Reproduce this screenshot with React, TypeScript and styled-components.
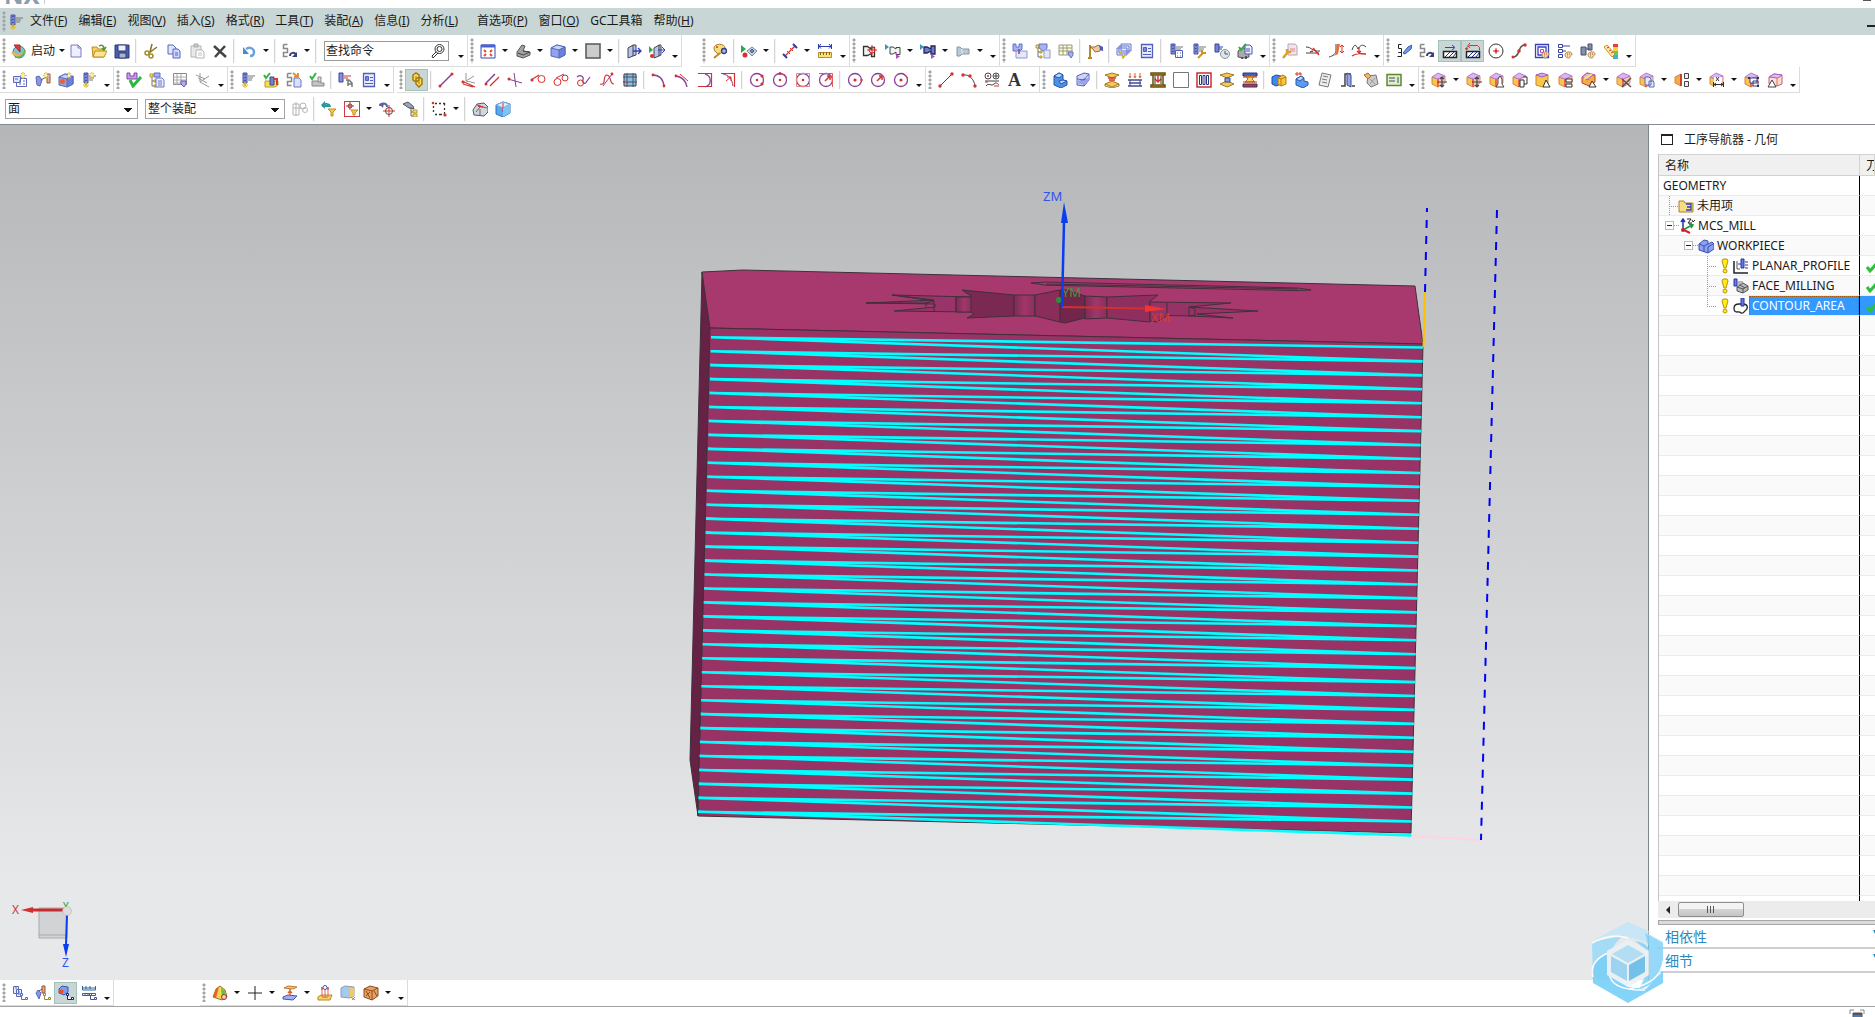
import React from "react";
import styled, { createGlobalStyle, css } from "styled-components";

/* ---------- icon art: [path, stroke, fill, stroke width] on a 16 x 16 grid ---------- */

type Shape = [d: string, stroke?: string, fill?: string, width?: number];

const dot = (x: number, y: number, r: number) =>
  `M${x - r} ${y}a${r} ${r} 0 1 0 ${2 * r} 0a${r} ${r} 0 1 0 ${-2 * r} 0z`;

const BLUE = "#5a68bc";
const RED = "#d9302c";
const PURPLE = "#8a3f96";
const DARK = "#222";

const cube: Shape[] = [
  ["M1 5l6-3 8 2v8l-6 3-8-2z", BLUE, "#8fa4ea"],
  ["M1 5l6-3 8 2-6 3z", BLUE, "#c8d4fc"],
  ["M9 7v8l6-3V4z", BLUE, "#6c82d8"],
];
const goldCube: Shape[] = [
  ["M1 5l6 2v8l-6-3z", "#d8842e", "#fbc44e"],
  ["M7 7l7-3v7l-7 4z", "#d88a80", "#f6c8b8"],
  ["M1 5l6-4 7 3-7 3z", "#b07ed0", "#dcb4ee"],
  ["M7 7v8", "#ea5c3c", "none", 1.6],
];
const mill: Shape[] = [
  ["M3 1h4v10H3z", "#4a52a4", "#8490e0"],
  ["M4 3l2-1M4 6l2-1M4 9l2-1", "#3c448c"],
  ["M8 4h7M8 6h5M8 8h4", "#777"],
];
const star: Shape[] = [["M11 0v7M8 3.5h7M9 1l4 5M13 1L9 6", "#e5bb1d"], [dot(11, 3.5, 1), "#fff6a0", "#fff"]];
const lowStar: Shape[] = [["M5 10v6M2 13h6M3 11l4 4M7 11l-4 4", "#e5bb1d"]];
const page: Shape[] = [["M7 6h6l2 2v7H7z", "#6978c8", "#e9edff"], ["M9 9h4M9 11h4M9 13h4", "#6978c8"]];
const tree: Shape[] = [["M3 4v10h3M3 9h3", "#777"], ["M1 2h3v3H1zM5 8h2v2H5zM5 13h2v2H5z", "#b69a2c", "#f2dc78"]];
const holder: Shape[] = [["M1 1h3v3h3V1h3v5L8 8v4H6V8H1z", "#6070c8", "#a7b2f0"]];
const palette: Shape[] = [["M8 12c0-4 7-4 7-1 0 2-2 1-2 3s-5 1-5-2z", "#b48a4c", "#f5dcae"], ["M10 11h1M12 11h1", RED], ["M10 13h1", "#3bb54a"]];
const listS: Shape[] = [["M5.5 1.500h-3v4h3v4h-3M2.500 9.500h3v4h-4", DARK]];
const listG: Shape[] = [["M1.500 1.500h4M1.500 1.500v4h4v4h-4v4h4", "#888", "none", 1.5]];
const redo: Shape[] = [["M8 13c0-4 5-4 6-1", "#3a3f7c", "none", 2], ["M15 9v5h-5z", "none", "#3a3f7c"]];
const tag = (color: string): Shape[] => [["M8.500 8.500h2v2h-2zM9.500 10.500v4h4M13.500 12.500h2v2h-2z", color, "#fff"]];
const funnel: Shape[] = [["M7 8h8l-3 3v4h-2v-4z", "#c98b1c", "#fcc84c"]];
const cone: Shape[] = [["M1.500 3.500h4l4 3V4.500h3v9h-3v-3l-4 2h-4z", "#333", "#f2f2f2", 1.3]];
const target: Shape[] = [[dot(8, 8, 6.5), PURPLE, "none", 1.3]];

const ART: Record<string, Shape[]> = {
  app: [...mill, ...lowStar],
  launch: [
    [dot(8, 9, 6), "#2b7f95", "#7cc4d4"],
    ["M1 9c4 5 10 5 13-1", "#f7b23c", "none", 2.5],
    ["M4 14c5 1 9-2 10-7", "#6cb04c", "none", 1.5],
    ["M3 2l6 0v7z", "#b22020", "#e03c34"],
  ],
  newFile: [["M3 2h7l3 3v9H3z", "#7f78c4", "#edf0ff"], ["M10 2v3h3", "#7f78c4"]],
  open: [
    ["M1 4h5l1 2h6v8H2z", "#b88d25", "#f5cf60"],
    ["M4 8h12l-3 6H2z", "#b88d25", "#ffe594"],
    ["M8 3c3-2 5 0 5 3M11 5l2 2 2-3", "#4e9b30", "none", 1.5],
  ],
  save: [["M1 2h14v13H1z", "#303b7c", "#4a5cae"], ["M4 2h8v6H4z", "#303b7c", "#eef0f8"], ["M5 10h7v5H5z", "#303b7c", "#a9b4c4"]],
  cut: [["M9 1L7 9M14 4L6 10", "#8a7326", "none", 1.5], [dot(4, 10, 2), "#a58b2c", "none", 1.5], [dot(8, 13, 2), "#a58b2c", "none", 1.5]],
  copy: [["M2 2h5l3 3v6H2z", "#5966bb", "#dfe4ff"], ["M7 6h5l2 2v7H7z", "#5966bb", "#cdd5ff"], ["M9 10h3M9 12h3", "#5966bb"]],
  paste: [["M2 3h10v11H2z", "#b4b4b4", "#e9e9e9"], ["M5 1h4v3H5z", "#a9a9a9", "#ccc"], ["M7 7h6l2 2v6H7z", "#b4b4b4", "#fff"], ["M9 10h4M9 12h4", "#c4c4c4"]],
  remove: [["M2 3l12 11M13 3L3 14", "#444", "none", 2.5]],
  undo: [["M5 6c4-3 8 0 8 3 0 3-2 4-4 4", "#6aa2e0", "none", 2.5], ["M2 4v7h6z", "none", "#4a88d4"]],
  repeat: [...listG, ...redo],
  fit: [["M1 2h14v13H1z", "#3548b8", "#fff"], ["M1 3h14", "#4a62d8", "none", 3], ["M4 7l2 2M12 7l-2 2M4 13l2-2M12 13l-2-2", "#e2502c", "none", 2]],
  orient: [["M2 9l5-7 3 1-2 5 7 1v3l-7 3-6-2z", "#555", "#a4a4a4"], ["M3 10l5 2 7-3M8 8l6 1", "#444"]],
  cube,
  square: [["M1 1h14v14H1z", "#555", "#ccc", 1.5]],
  section: [["M2 5l5-3v11l-5 2zM7 2h3v10l-3 1", "#444", "#b8c4ee"], ["M7 8h7M12 5l3 3-3 3", "#2c3cc0", "none", 1.3]],
  sectionB: [["M5 5l5-3v11l-5 2zM10 2h2v10l-2 1", "#444", "#b8c4ee"], ["M9 7h6M13 4l3 3-3 3", "#2c3cc0"], ["M0 3l4 4-4 3z", "none", "#2fa84c"], [dot(3, 13, 2), "none", RED]],
  paint: [["M2 5c0-5 11-5 11 0 0 4-3 3-4 5s-7 0-7-5z", "#a08032", "#f6dc7c"], [dot(5, 4, 1), "none", RED], [dot(12, 8, 2.5), "#39407c", "#aab4ee", 1.3], ["M8 10l-6 5", "#c4872c", "none", 2]],
  showHide: [["M0 2l5 4-5 4z", "none", "#2fa84c"], [dot(4, 12, 2.5), "none", RED], ["M6 8l5-4 5 4-5 5z", "#7a889c", "#c3d4ea"], ["M9 8l2-2 2 2-2 2z", "#55627c", "#6f86b4"]],
  measure: [["M3 13L13 3", RED, "none", 1.3], ["M1 11l4 4M11 1l4 4", "#333c9c", "none", 2], ["M5 8l3 3M8 5l3 3", RED]],
  ruler: [["M1 3.500h14M1.500 1v5M14.500 1v5M4 1L2 3.500l2 2M12 1l2 2.500-2 2", "#2c3ca8"], ["M1.500 9.500h13v5h-13z", "#b7902c", "#fbe07c"], ["M3.500 9v3M6.500 9v3M9.500 9v3M12.500 9v3", "#80641c"]],
  coneTarget: [...cone, [dot(10, 7, 3), RED], ["M10 2v10M5 7h10", RED]],
  coneMove: [["M5 4h3l3 2V4.500h4v7h-4V9L8 11H5z", "#444", "#f4f4f4"], ["M0 1l4 3-4 3z", "none", "#3b95b8"], ["M11 11l4 2.500-4 2.500z", "none", "#b44cc4"]],
  coneDark: [["M4 4h3l4 2V3h4v8h-4V8L7 10H4z", "#23265c", "#6f7ac8", 1.3], ["M0 1l4 3-4 3z", "none", "#3b95b8"], ["M11 11l4 2.500-4 2.500z", "none", "#b44cc4"]],
  coneSoft: [["M2 4h3l2 2h7v5H7l-2 2H2z", "#8496a2", "#b8cad8"], ["M7 6v5", "#e4eef4"]],
  holderPage: [...holder, ["M4 8h11v7H4z", "#8f99c9", "#e4e7f5"], ["M7 6v5", PURPLE, "none", 1.5]],
  holderTree: [...tree, ["M4 1h8v4l-2 3H8L4 5z", "#6070c8", "#a7b2f0"], ["M9 7h6v8H9z", "#8f99c9", "#e4e7f5"]],
  holderGrid: [["M1 2h13v10H1z", "#9a9a7a", "#fbfbe6"], ["M1 5h13M1 8h13M5 2v10M9 2v10", "#9a9a7a"], ["M10 9h5v3l-2 3-2-3z", "#6070c8", "#a7b2f0"]],
  point: [["M3 2v13M1 15h4", "#b68a24", "none", 2], ["M3 4h5l3-2 3 2-1 4-5 1-2-3z", "#9c6a3c", "#f4c89c"], ["M12 2l4 2v4l-3-1z", "none", "#4658c4"]],
  windows: [["M5 1h10v7H5zM3 3h10v7H3zM1 5h10v7H1z", "#6878cc", "#e5eaff"], ["M3 8l3 3M6 12l1 3 2-3", "#d4ae24", "#fff0a0", 1.5]],
  report: [["M2.500 1.500h11v13h-11z", "#5260bc", "#e8ecff", 1.3], ["M4.500 4.500h3v4h-3z", "#5260bc", "#7c88dc"], ["M9 5.500h3M9 8.500h3M4 11.500h8", "#5260bc"]],
  millPage: [...mill, ["M7.500 7.500h7v7h-7z", "#5260bc", "#fff"], ["M9 10h1M12 10h1M9 13h1M12 13h1", "#5260bc"]],
  millWrench: [...mill, ["M7 15l5-5M11 7v3h4", "#c99424", "none", 2]],
  millClock: [["M1 1h4v8H1zM5 4h4M5 6h3", "#3d4596", "#7480d8"], [dot(11, 11, 4.5), "#8a959c", "#dbe6ea"], ["M11 8v3h3", "#555"]],
  post: [["M1 8l4-3 7 1v8l-4 1-7-1z", "#555", "#aaa"], ["M2 4l2 3 5-6", "#37ad38", "none", 2], ["M8 2h5l2 2v7H8z", "#4a58b4", "#e9edff"], ["M9 6h4M9 8h4", "#4a58b4"], ["M5 14v2M9 13v3", "#555", "none", 2]],
  wrenchPage: [["M6 1h7l2 2v9H6z", "#b8a4b4", "#f3e3ec"], ["M8 6h5M8 8h5", "#d88"], ["M1 15l5-6M5 6v3h4", "#d8a32c", "none", 2.5]],
  trimA: [["M1 4c6 0 6 5 14 4M1 10h13", "#444"], ["M8 5l6 7M5 9l3-1", RED, "none", 1.5]],
  trimB: [["M8 1v6c0 4-3 6-7 7", "#444"], ["M9 1l-1 9-2 3 4-2 2-10z", "none", "#ee6a3a"], ["M14 2v8M12 4l2-2 2 2M12 8l2 2 2-2", RED]],
  trimC: [["M1 7c2-6 4-6 6-1 2-4 5-5 8-2", "#444"], ["M1 13c5-4 9-2 14-2M8 4v6M6 8l2 2 2-2", RED, "none", 1.3]],
  spanLight: [...listS, ["M7 10l5-6 4-2-1 4-6 5z", "#3355b0", "#6f9ce4"]],
  spanNext: [...listG, ...redo],
  hatch: [["M1.500 8.500h13v6h-13z", DARK, "#fff", 1.5], ["M3 14l5-5M7 14l5-5M11 14l3-4", "#24308c"], ["M3 4.500h9M10 2l3 2.500L10 7", "#2a44cc"]],
  hatchRed: [["M1.500 8.500h13v6h-13z", DARK, "#fff", 1.5], ["M3 14l5-5M7 14l5-5M11 14l3-4", "#24308c"], ["M1.500 7V4.500l3-2h8l2 2V7M5 0L3 2.500 5 5M0 5l1.500 2L3 5", RED]],
  ring: [[dot(8, 8, 7), "#333"], [dot(8, 8, 1.5), "none", RED], ["M8 5v6M5 8h6", RED]],
  spline: [["M2 14c8 0 4-12 12-12", "#555", "none", 1.5], [dot(2, 14, 1.5), "none", RED], [dot(8, 8, 1.8), "none", RED], [dot(14, 2, 1.8), "none", RED]],
  maze: [["M1.500 1.500h13v13h-13zM4 4h8v8H4z", "#3a40c0", "#fff", 1.3], ["M6.500 6.500h3v3h-3z", "#b34cb8"], ...palette],
  treePal: [["M1.500 1.500h4v3h-4zM1.500 6.500h4v3h-4zM1.500 11.500h4v3h-4zM6 3h7M6 8h3", "#3a40a0"], ...palette],
  blocksPal: [["M1 4h5v8H1zM8 1h4v6H8z", "#4a5060", "#8090b0"], ["M6 6h4", "#4a5060"], ...palette],
  rainbow: [["M10 1h5v4h-5z", "none", "#e8402c"], ["M10 4h5v4h-5z", "none", "#f8d43c"], ["M10 8h5v4h-5z", "none", "#5cd04c"], ["M10 12h5v4h-5z", "none", "#3cb0e0"], ["M1 4l3-2 8 9-3 3z", "#c89a2c", "#ffe9a4"], ["M4 5l2-1M6 8l2-1M8 10l2-1", RED]],
  newProgram: [["M4.500 6.500h10v8h-10z", BLUE, "#fff"], ["M1.500 4.500h7v6h-7z", BLUE, "#dfe4ff"], ["M3 7h3M7 9h2M7 12h2M11 9h2M11 12h2", BLUE], ...star],
  newTool: [["M1 5l3-1 3 4-2 6-3-1z", BLUE, "#8a98e0"], ["M12 2h3v9h-3z", "#9c5430", "#d8b8b0"], ["M6 8l5-3", "#555"], ...star],
  newGeometry: [...cube, [dot(4.5, 9.5, 2.5), "none", "#ee6030"], ...star],
  newOperation: [...mill, ...lowStar, ...star],
  verify: [["M1 1h3v3h4V1h3v6H1z", "#8048a8", "#c79be8"], ["M4 8l3 6 8-9", "#2fb640", "none", 3]],
  treePage: [...tree, ["M5 1h6v4H5z", "#6a64c8", "#a7b2f0"], ...page],
  tableTool: [["M1.500 1.500h13v11h-13z", "#888", "#fff"], ["M1 5h14M1 8h14M1 11h14M5 2v11M9 2v11", "#aaa"], ["M9 9h5v3l-2 3-3-3z", "#8048c8", "#a7b2f0"]],
  axesGrey: [["M5 1v9l9 5M5 10L14 4M1 3l9 4M3 6l9 5", "#999"]],
  genPath: [...mill, ...lowStar],
  verifyPath: [["M2 9h13v4l-3 2H2z", "#b89c24", "#f8e04c"], ["M7 5h4v8H7z", "#3d4596", "#7480d8"], ["M11 7h3v6", "#d0402c", "none", 2], ["M1 3l2 3 4-5", "#2fb640", "none", 2]],
  listPath: [...listG, ["M8 6h5l2 2v7H8z", "#6978c8", "#d8e0ff"], ["M7 1l5 4M12 1v4H8", "#e09030", "none", 2]],
  machine: [["M3 9h7l2 2h3v3H3z", "#888", "#c4c4c4"], ["M9 5h3v5H9z", "#888", "#ddd"], ["M1 4l2 3 4-6", "#2fb640", "none", 2]],
  toolPath: [["M1 1h4v9H1z", "#3d4596", "#8490e0"], ["M6 4h7M6 6h4", RED], ["M8 8h3l3 3v4M10 8v6M10 12h4", "#777", "none", 1.5]],
  link: [["M4 3l3-2 3 2v5L7 10 4 8zM7 7l3-2 3 2v5l-3 3-3-3z", "#a07a18", "#ffe04c", 1.5], ["M7 4v3M10 9v3", "#a07a18"]],
  line: [["M2 14L14 2", PURPLE, "none", 1.5], [dot(2, 14, 1.5), "none", RED], [dot(14, 2, 1.5), "none", RED]],
  lineAxes: [["M5 1v8l9 2M5 9l8-5", "#999"], ["M1 9l13 6M2 12l10 3", RED, "none", 1.3], [dot(2, 10, 1.5), "none", RED]],
  parallel: [["M2 11L11 2", PURPLE, "none", 1.5], ["M6 14l9-9", RED, "none", 1.2], [dot(2, 12, 1.5), "none", RED]],
  cross: [["M1 7l14 4M7 1l2 14", PURPLE], [dot(2, 7, 1.5), "none", RED]],
  tangentA: [["M1 8l8-5", RED, "none", 1.3], [dot(11.5, 7, 3.5), RED], [dot(2, 8, 1.5), "none", RED]],
  tangentB: [["M3 6l8-4", PURPLE], [dot(4.5, 10, 3.5), RED], [dot(12, 6, 3), RED]],
  tangentC: [["M1 5c4-3 7 0 6 3s2 5 4 1l3-4", PURPLE, "none", 1.2], [dot(4.5, 11, 3), RED]],
  tangentD: [["M1 12c7 2 2-9 7-9 5 1 2 9 7 9", RED, "none", 1.2], ["M4 14L13 2", PURPLE], [dot(13, 2, 1.4), "none", RED]],
  mesh: [["M2 2h12v12H2z", "#345", "#8fbce0"], ["M1 5h14M1 10h14M5 1v14M11 1v14", "#456"], [dot(2, 10, 1), "none", RED]],
  arcA: [["M2 3c6 0 10 4 11 11", PURPLE, "none", 1.4], [dot(2, 3, 1.4), "none", RED], [dot(13, 14, 1.4), "none", RED]],
  arcB: [["M2 4c6 1 10 5 11 11", PURPLE, "none", 1.4], ["M6 2l8 7", RED], [dot(2, 4, 1.4), "none", RED]],
  arcC: [["M1 1.500h13.500v13H1", RED, "none", 1.2], ["M8 2c7 2 7 11 0 13", PURPLE, "none", 1.3]],
  arcD: [["M1 1.500h13.500V15", RED, "none", 1.2], ["M3 2c6 1 9 5 10 12", PURPLE], ["M6 9l5-4M11 9V5H7", RED]],
  circA: [...target, [dot(8, 8, 1.3), "none", RED], [dot(13, 4, 1.6), "none", RED], [dot(13, 12, 1.6), "none", RED]],
  circB: [...target, [dot(8, 8, 1.3), "none", RED], [dot(8, 1.6, 1.5), "none", RED], ["M12 2l3 4", RED]],
  circC: [...target, [dot(8, 8, 1.3), "none", RED], ["M1.500 1.500h13v13h-13z", "#e88480"]],
  circD: [...target, ["M1 1.500h13.500V15", "#e05c58"], ["M7 9l5-5M12 4v4M12 4H9", RED, "none", 1.5]],
  circE: [...target, [dot(8, 8, 1.6), "none", RED], [dot(14.5, 8, 1.2), "none", RED]],
  circF: [...target, ["M7 9l5-5M12 4v4M12 4H9", RED, "none", 1.5]],
  circG: [...target, [dot(8, 8, 1.6), "none", RED], ["M9 1l6 5", RED]],
  lineRed: [["M2 14L14 2", "#444"], [dot(2, 14, 1.7), "none", RED], [dot(14, 2, 1.7), "none", RED]],
  arcRed: [["M2 3c6-1 11 4 12 11", "#444"], [dot(2, 3, 1.7), "none", RED], [dot(9, 4, 1.7), "none", RED], [dot(14, 14, 1.7), "none", RED]],
  shapes: [[dot(4, 4, 3), "#444"], [dot(12, 4, 3), "#444"], ["M10 4h4M12 2v4M1 9h14M2 14c3-4 5 1 8-2s4 1 5 1", "#444"], [dot(4, 4, 1), "none", RED], ["M1 10h3M10 14h5", RED]],
  extrude: [["M2 4l5-3 4 2v5l4 1v4l-6 3-7-3z", "#2a57a8", "#4c90e8"], ["M2 4l5-3 4 2-4 3zM7 9l4-1 4 1-6 3z", "#2a57a8", "#b4d6ff"]],
  sheets: [["M2 11l7-4 5 1-5 6-7-1zM2 4l7-3 5 1-5 6-7-1z", "#5c60bc", "#cdd4fc"], ["M2 7v4M9 8v6M14 2v6", "#5c60bc"], ["M2 8l7 1 5-5v4l-5 5-7-2z", "none", "#9aa4ec"]],
  goldStack: [["M1 3l7-2 7 2-7 3zM1 12l7-3 7 3-7 3z", "#a07c20", "#f5c954"], ["M4 6h8M5 8h6", RED, "none", 1.5], ["M1 12v2l7 2 7-2v-2", "#a07c20"]],
  mouldRed: [["M3 1v4M8 1v4M13 1v4M2 4l1 2 1-2M7 4l1 2 1-2M12 4l1 2 1-2", "#e0602c"], ["M1 8h14M2 11h12M1 14h14", "#444c90", "none", 1.5], ["M3 8v6M13 8v6", "#444c90"]],
  press: [["M1 1h14v2H1zM1 13h14v2H1zM3 3v10M13 3v10", "#6a5010", "#d8a92c", 1.5], ["M8 3v7M5 7l3 3 3-3", RED, "none", 1.5], ["M5 4v8M11 4v8", "#333"]],
  blank: [["M.5.5h15v15H.5z", "#777", "#fff"]],
  bars: [["M1 1h14v14H1z", "#cc2f33", "#fff", 1.5], ["M3.500 3.500h2v9h-2zM7 3.500h2v9H7zM10.500 3.500h2v9h-2z", "#2c3680", "#fff"]],
  goldDie: [["M1 3l7-2 7 2-7 3zM1 12l7-3 7 3-7 3z", "#a07c20", "#f5c954"], ["M6 6h5v4H6z", "#3d4596", "#7ea0e4"]],
  mouldStack: [["M1 1h14v3H1z", "#2b3680", "#4a5cc0"], ["M1 12h14v3H1z", "#2b3680", "#c8342c"], ["M3 4l3 3-3 3h10l-3-3 3-3z", "#a07c20", "#f5d464"], ["M1 5h14M1 10h14", "#c8342c"]],
  boxes: [["M1 5l4-2 5 1v8l-5 2-4-2z", "#1f4a94", "#3c88ec"], ["M7 6l5-3 3 2v7l-5 2-3-2z", "#b07a14", "#ffc63c"], ["M7 6l3 1 5-2M10 7v7", "#b07a14"]],
  blueStep: [["M2 7l5-3 3 2v3l4 1v3l-5 3-7-3z", "#2a57a8", "#5c9cf0"], ["M2 7l5-3 3 2-4 3z", "#2a57a8", "#b4d6ff"], ["M3 0v4M6 0v3M1 2h7", "#e0302c"]],
  sheet: [["M5 1l9 2-3 12-9-2z", "#777", "#eee"], ["M6 4l5 1M5 7l5 1M5 10l5 1", "#777"]],
  door: [["M1 14h4V2h6M12 14h3", "#444", "none", 1.5], ["M7 1l4 2v12l-4-2z", "#3c4790", "#98a6ec"]],
  sketch: [["M5 4l8-1 2 9-7 3-4-4z", "#777", "#ccc"], ["M7 7l5 5M12 6l-5 6", "#999"], ["M1 3l4-2 3 3-3 3z", "#b06c2c", "#f2b46c"]],
  board: [["M1 2.500h14v11H1z", "#5a8a2c", "#e2f0d2", 1.5], ["M3 6h6M3 9h6M12 5v6", "#446"]],
  moveFace: [...goldCube, ["M11 5v10M6 10h10M9 7l2-2 2 2M9 13l2 2 2-2", "#444", "none", 1.2]],
  pullFace: [...goldCube, ["M11 4l-2 3v5l-2 3h8l-2-3V7z", "#444", "#fff"]],
  offset: [...goldCube, ["M8 8h4v7H8zM11 5h4v7h-3", "#333", "#fff"]],
  cyl: [["M1 3v10l6 2 6-2V3z", "#c88a20", "#f8c648"], ["M1 3l6-2 6 2-6 2z", "#a062c4", "#d6a4ea"], ["M8 15l3-7 4 7z", "#333", "#fff"]],
  resize: [...goldCube, ["M8 7h6v3H8zM8 12h6v3H8z", "#333", "#fff"]],
  blend: [["M1 5l5-4 8 2v7l-6 4-7-3z", "#c04030", "#f4ac48"], ["M1 5l5-4 8 2c-4 0-6 3-7 5z", "#a062c4", "#dcb4ee"], ["M3 7l8-5", "#ffe068", "none", 2], ["M8 15l3-6 4 6z", "#333", "#fff"]],
  delFace: [...goldCube, ["M6 7l9 8M15 6l-9 9", "#555", "none", 1.6]],
  copyFace: [...goldCube, ["M6 5h4l2 2v6H6zM10 9h4l1 1v5h-5z", "#5a6ab0", "#e5eaff"]],
  mirror: [["M1 5l6-3v12l-6-3z", "#d8842e", "#f9a852"], ["M7 2v12", "#d0402c", "none", 2], ["M10.500 1.500h4v5h-4zM10.500 9.500h4v5h-4z", "#444", "#eee"]],
  dim: [...goldCube, ["M5 5h8v10H5z", "none", "#fff"], ["M7 5l3 4M10 5l-3 4M4 12.500h11M4.500 10v5M14.500 10v5M7 11l-2 1.500L7 14M12 11l2 1.500-2 1.500", "#333"]],
  group: [...goldCube, ["M6 6h7v5H6zM9 9h5v5H9z", "#333a80", "#fff"], ["M4 5h2v2H4zM13 5h2v2h-2zM13 13h2v2h-2z", "none", "#334"]],
  shell: [["M2 5l5-3 8 1v9l-5 2-8-2z", "#d05a6c", "#f8dcdc"], ["M2 5l5-3 8 1-4 3z", "#a062c4", "#e6bcf2"], ["M10 6v8", "#e0762c"], ["M1 15l4-7 4 7z", "#444", "#fff"]],
  treeGrey: [["M1 3h6v11H1zM4 1v14M1 7h9", "#b4b4b4"], [dot(11, 5, 3), "#b4b4b4"], [dot(13, 9, 2.5), "#b4b4b4"]],
  filterReset: [["M9 6c0-4-7-4-7-1h7", "#2c97a4", "none", 2], ["M0 4l4-4v8z", "none", "#2c97a4"], ...funnel],
  filterRed: [["M0 0h16v16H0z", "#d23a42", "#fff", 2], [dot(6, 5, 2), "#444"], ["M6 1v8M2 5h8", RED], ["M7 9h7l-3 3v2H9v-2z", "#c98b1c", "#fcc84c"]],
  rotateAt: [["M8 6c0-5-7-4-7-1", "#5a629c", "none", 2], ["M0 3l4 4 1-5z", "none", "#5a629c"], [dot(10, 10, 3.5), "#444"], ["M10 4v12M4 10h12", RED]],
  findTree: [["M1 3l5-2 5 4 1 3-5-1z", "#556", "#9aa8b4"], ["M9 6v9h3M9 11h3", "#666"], ["M11 9h4v3h-4zM11 13h4v3h-4z", "#b69a2c", "#f2dc78"]],
  marquee: [["M4 2.500h2M8 2.500h2M12 2.500h1.500v2M13.500 7v2M13.500 11v2M4 13.500h2M8 13.500h3M2.500 5v2M2.500 9v2", "#333", "none", 1.3], [dot(2, 2, 1.3), "none", RED], [dot(14, 14, 1.6), "none", RED]],
  mouse: [["M1 9l4-6 7-1 4 4v5l-4 4-10-1z", "#556", "#cfd6dc"], ["M5 4l6 2M8 6l-4 5M11 6l4 1M8 8v6", "#667"], ["M6 5l5 1", RED, "none", 1.5]],
  cubeSky: [["M1 4l7-3 7 2v9l-7 4-7-3z", "#2a6ec0", "#5ca8f0"], ["M1 4l7-3 7 2-7 4z", "#7aa0cc", "#dceefc"], ["M8 2v9", RED], ["M8 7v9l7-4V3z", "none", "#7fc4f4"]],
  viewProgram: [["M1.500 1.500h5v7h-5zM4.500 4.500h5v7h-5z", BLUE, "#e6eaff"], ["M3 3h2M6 7h2M6 9h2", BLUE], ...tag(BLUE)],
  viewTool: [["M1 8l2-3 3 3-2 6z", BLUE, "#8a98e0"], ["M7 1h3v7H7z", "#9c5430", "#e0a888"], ["M4 6l3-2", "#555"], ...tag("#9a8a34")],
  viewGeometry: [["M1 4l3-3 6 1v5l-4 3-5-2z", "#3c54ac", "#7c9cf0"], [dot(3.5, 6.5, 2), "none", "#ee4a2c"], ...tag("#141f86")],
  viewMethod: [["M1.500 1v4h13V1M1 3h13M1.500 8.500h13v2h-13zM5 1v3M9 1v3M4 8v3M7 8v3", "#33629c"], ...tag("#4654a0")],
  heatPart: [["M1 12l3-8 4-3 5 4 2 7-5 3z", "#8c7430", "#f8d848"], ["M1 12l3-8 3-2-3 11z", "none", "#f0602c"], ["M9 3l5 4-4 5z", "none", "#5cc04c"], [dot(12, 12, 2.5), "#a02c2c", "#f4d0c0"]],
  plus: [["M8 1v14M1 8h14", "#222"]],
  layers: [["M2 3l4-2 9 1-4 2z", "#b8782c", "#f8c884"], ["M1 12l5-2 9 1-4 4-10-1z", "#4a50b0", "#a4b0f4"], ["M8 4v6M6 8l2-2 2 2", "#e0602c", "none", 1.5]],
  project: [["M1 12l3-2h11l-2 5H1z", "#b68a24", "#fbd45c"], ["M5 2v10M11 2v10M8 3v10M5 12h6", "#d86a64"], [dot(8, 2.5, 2), "#4a50b0", "#fff"], ["M5 2v3M11 2v3", "#d2342c"]],
  waveLink: [["M1 3l4-2 9 1v9l-4 2-9-1z", "#8c9cb4", "#a4caee"], ["M10 3h4v8l-4 2z", "none", "#f6c864"], ["M11 12l4 3M12 15l3-3", "#889"]],
  crate: [["M1 4l6-3 8 2v8l-6 4-8-3z", "#8c4c24", "#dca860"], ["M1 4l8 2 6-3M9 6v9M3 6l4 7M7 7l-4 4M11 6l3 5", "#a83c24"]],
  folder: [["M1 3h5l1 2h8v9H1z", "#a8842c", "#f8dc80"], ["M8 6h5v3H9M9 9h4v3H8", "#2b40c8", "none", 1.3]],
  mcs: [["M4 13V2M2 4l2-3 2 3", "#1c36b0", "none", 1.5], ["M4 12l9-5M10 6l4 1-2 3", "#1f9440", "none", 1.5], ["M3 11l8 4", "#d0242c", "none", 2], [dot(4, 12, 2), "none", "#d0242c"], ["M8 1h4l-3 4h4M13 2l1 2 2-2", "#222"]],
  workpiece: [["M1 6l5-4 4 1v3l4-2 2 2v5l-6 4-9-3z", "#3c50b4", "#8aa0f0"], ["M1 6l5 2v6M6 8l4-2M10 9l5-3M10 9v6", "#3c50b4"]],
  warn: [["M3 1h4l1 2-2 7H4L2 3z", "#b8960c", "#ffe81c"], [dot(5, 13, 2), "#b8960c", "#ffe81c"]],
  opPlanar: [["M1 3v12h14", "#222", "none", 1.5], ["M4 3v8h3", "#555"], ["M8 1h3v9H8z", "#2a33a0", "#6878e4"], ["M5 6h3M12 4h3M12 7h3M12 10h3", "#2a33a0"]],
  opFace: [["M4 9l6-4 5 3v4l-5 3-6-2z", "#555", "#b8b8b8"], ["M4 9l6 2 5-3M10 11v4M7 7l5 3", "#555"], ["M1 1h3v7H1z", "#2a33a0", "#6878e4"], ["M5 4h5M5 6h3", "#777"]],
  opContour: [["M1 10c0-4 3-4 5-4h4c5 0 5 4 3 6-2 1-2 4-5 3-2-2-3-1-4-1-2 0-3-1-3-4z", "#222", "#fff", 1.3], ["M8 0h3v8H8z", "#2a33a0", "#6878e4"]],
  check: [["M1 9l3 4 8-9", "#2cc03c", "none", 3]],
  search: [[dot(9.5, 6, 4.5), "#333"], [dot(9.5, 6, 2.5), "#333"], ["M6 9l-4 4 1 2 5-5", "#333"]],
};

const Svg = styled.svg`
  display: block;
  flex: none;
`;

const Glyph = ({ name, size = 16 }: { name: string; size?: number }) => (
  <Svg width={size} height={size} viewBox="0 0 16 16" aria-hidden="true">
    {ART[name].map(([d, stroke = "none", fill = "none", width = 1], i) => (
      <path key={i} d={d} stroke={stroke} fill={fill} strokeWidth={width} />
    ))}
  </Svg>
);

/* ---------- shared pieces ---------- */

const Global = createGlobalStyle`
  *, *::before, *::after { box-sizing: border-box; }
  body {
    margin: 0;
    overflow: hidden;
    background: #fff;
    color: #1a1a1a;
    font: 12px/16px "Noto Sans", "Noto Sans CJK SC", sans-serif;
  }
  button, input, select { font: inherit; color: inherit; }
`;

const Shell = styled.div`
  display: flex;
  flex-direction: column;
  height: 100vh;
  overflow: hidden;
`;

const TitleStrip = styled.header`
  display: flex;
  justify-content: space-between;
  align-items: flex-end;
  height: 8px;
  overflow: hidden;
  padding: 0 4px 4px;
  flex: none;
`;

const Brand = styled.span`
  font-size: 24px;
  line-height: 18px;
  font-weight: 700;
  color: #8a9dab;
  padding-right: 4px;
  border-right: 1px solid #ccc;
`;

const WindowMinimise = styled.button`
  width: 8px;
  height: 4px;
  padding: 0;
  border: 0;
  background: linear-gradient(#555, #555) top / 8px 1px no-repeat;
`;

const Grip = styled.span`
  width: 8px;
  align-self: stretch;
  margin: 3px 0;
  flex: none;
  background: radial-gradient(circle at 4px 2px, #a2a2a2 1px, transparent 2px) 0 0 / 8px 4px;
`;

const MenuBar = styled.nav`
  display: flex;
  align-items: center;
  height: 27px;
  flex: none;
  background: #c8d7d5;
`;

const MenuButton = styled.button`
  border: 0;
  background: none;
  padding: 0 5px 2px 6px;
  height: 20px;
  line-height: 16px;
  white-space: nowrap;
`;

const MenuIcon = styled.span`
  width: 16px;
`;

const MenuGap = styled.span`
  width: 8px;
`;

const ChildMinimise = styled.button`
  margin-left: auto;
  width: 8px;
  height: 14px;
  border: 0;
  padding: 0;
  background: linear-gradient(#222, #222) 0 10px / 8px 2px no-repeat;
`;

const ToolRow = styled.div<{ $height: number }>`
  display: flex;
  height: ${(p) => p.$height}px;
  flex: none;
`;

const Group = styled.div<{ $gap?: number }>`
  display: flex;
  align-items: center;
  margin-left: ${(p) => p.$gap ?? 0}px;
  border-right: 1px solid #dcdcdc;
  border-bottom: 1px solid #dcdcdc;
`;

const ToolButton = styled.button<{ $pressed?: boolean }>`
  display: flex;
  align-items: center;
  justify-content: center;
  width: 23px;
  height: 22px;
  flex: none;
  padding: 0;
  border: 1px solid transparent;
  background: none;
  ${(p) =>
    p.$pressed &&
    css`
      background: #c8d7d5;
      border-color: #a4c1bb;
    `}
`;

const ArrowButton = styled.button<{ $end?: boolean }>`
  width: ${(p) => (p.$end ? 13 : 12)}px;
  height: 22px;
  flex: none;
  padding: 0;
  border: 0;
  background: none;
  display: flex;
  justify-content: center;
  align-items: ${(p) => (p.$end ? "flex-end" : "center")};
  padding-bottom: ${(p) => (p.$end ? 4 : 0)}px;
  &::after {
    content: "";
    border: 3px solid transparent;
    border-top-color: #111;
    border-bottom-width: 0;
  }
`;

const Sep = styled.span`
  width: 2px;
  margin: 4px 2px 3px;
  align-self: stretch;
  flex: none;
  background: linear-gradient(90deg, #d4d4d4 50%, #f4f4f4 50%);
`;

const LaunchButton = styled.button`
  display: flex;
  align-items: center;
  gap: 4px;
  width: 56px;
  padding: 0 0 0 3px;
  border: 0;
  background: none;
  white-space: nowrap;
  &::after {
    content: "";
    border: 3px solid transparent;
    border-top-color: #111;
    border-bottom-width: 0;
  }
`;

const LetterIcon = styled.span`
  font: 700 18px/18px "Liberation Serif", serif;
  color: #333;
`;

const FinderBox = styled.label`
  display: flex;
  align-items: center;
  width: 125px;
  height: 20px;
  margin: 0 5px;
  padding-right: 2px;
  border: 1px solid #9a9a9a;
  background: #fff;
`;

const FinderInput = styled.input`
  flex: 1;
  min-width: 0;
  border: 0;
  padding: 0 1px;
  outline: 0;
  background: none;
  &::placeholder {
    color: #1a1a1a;
    opacity: 1;
  }
`;

/* A toolbar is written as tokens: icon name, "v" drop-down, "|" separator, "!name" pressed. */
const Tools = ({ items, label, gap }: { items: string; label: string; gap?: number }) => (
  <Group $gap={gap} role="toolbar" aria-label={label}>
    <Grip />
    {items.split(" ").map((token, i) => {
      if (token === "v") return <ArrowButton key={i} aria-label="更多选项" />;
      if (token === "|") return <Sep key={i} />;
      if (token === "launch")
        return (
          <LaunchButton key={i}>
            <Glyph name="launch" />
            启动
          </LaunchButton>
        );
      if (token === "finder")
        return (
          <FinderBox key={i}>
            <FinderInput aria-label="查找命令" placeholder="查找命令" />
            <Glyph name="search" />
          </FinderBox>
        );
      if (token === "text")
        return (
          <ToolButton key={i}>
            <LetterIcon>A</LetterIcon>
          </ToolButton>
        );
      const pressed = token[0] === "!";
      const name = pressed ? token.slice(1) : token;
      return (
        <ToolButton key={i} $pressed={pressed} aria-pressed={pressed} aria-label={name}>
          <Glyph name={name} />
        </ToolButton>
      );
    })}
    <ArrowButton $end aria-label="工具栏选项" />
  </Group>
);

const SelectionBar = styled.div`
  display: flex;
  align-items: center;
  height: 32px;
  flex: none;
  padding-left: 5px;
  border-bottom: 1px solid #858b90;
`;

const Picker = styled.select<{ $width: number; $after: number }>`
  appearance: none;
  width: ${(p) => p.$width}px;
  height: 20px;
  margin-right: ${(p) => p.$after}px;
  padding: 0 2px;
  border: 1px solid #a3a3a3;
  border-radius: 0;
  line-height: 16px;
  background:
    linear-gradient(to bottom right, #111 50%, transparent 51%) right 5px top 8px / 4px 4px no-repeat,
    linear-gradient(to bottom left, #111 50%, transparent 51%) right 9px top 8px / 4px 4px no-repeat,
    #fff;
`;

/* ---------- graphics area ---------- */

const Main = styled.main`
  display: flex;
  flex: 1;
  min-height: 0;
`;

const Viewport = styled.section`
  flex: 1;
  min-width: 0;
  border-right: 1px solid #7e878c;
  background: linear-gradient(#b5b6b7, #cfd0d1 45%, #e6e8ea 88%);
`;

const Scene = styled.svg`
  display: block;
  width: 100%;
  height: 100%;
  font-family: "Noto Sans", sans-serif;
`;

const PASSES = 35;
const zigzag = () => {
  const points: string[] = [`1423,347.5`];
  for (let i = 0; i < PASSES; i++) {
    const left = `${(711 - (13 * i) / 34).toFixed(1)},${(337.2 + 13.96 * i).toFixed(1)}`;
    const right = `${(1423 - (11.5 * (i + 1)) / 35).toFixed(1)},${(347.5 + 13.94 * (i + 1)).toFixed(1)}`;
    points.push(left, right);
  }
  return points.join(" ");
};

const Model = () => (
  <Scene viewBox="0 125 1648 855" preserveAspectRatio="xMidYMid meet" role="img" aria-label="加工模型视图">
    <defs>
      <linearGradient id="fillet">
        <stop offset="0" stopColor="#7d2a54" />
        <stop offset=".5" stopColor="#a0376b" />
        <stop offset="1" stopColor="#8c2e5d" />
      </linearGradient>
    </defs>
    <g stroke="#40303a" strokeWidth="1" strokeLinejoin="round">
      <path d="M702 272L710 328 698 816 690 760z" fill="#662244" />
      <path d="M702 272L743 270 1415 286 1423 344 710 328z" fill="#a8396f" />
      <path d="M710 328L1423 344 1411 833 698 816z" fill="#993366" />
      <path d="M1031 283l15-1 252 6 13 2-13 .6-252-5.4zM1046 284l252 5" fill="none" />
      <path d="M972 297l-80-2 42 5-68 3 69 1v3l-41 4 78 1z" fill="#98346a" />
      <path d="M892 295l42 6M866 303h60l8-2M926 302v5M956 297v14M934 301v11" fill="none" />
      <path d="M956 297h16v15h-16z" fill="url(#fillet)" />
      <path d="M962 290l52 5v21l-47 2 7-4-3-2v-16z" fill="#7a2a52" />
      <path d="M1014 295h21v21h-21z" fill="url(#fillet)" />
      <path d="M1035 295l25-5v32l-25-6z" fill="#8a2d5b" />
      <path d="M1060 290h7l18 6v22l-20 5-5-1z" fill="#73264b" />
      <path d="M1085 296l22 1v21l-22 1z" fill="url(#fillet)" />
      <path d="M1107 297l51-2-8 6v21l-43-4z" fill="#8f2f60" />
      <path d="M1150 302l81 1-42 4 69 4-61 3 36 4-43-2-23-.5-10 6.500-7-1z" fill="#953366" />
      <path d="M1167 303v13M1189 307v9l6-1v-6z" fill="none" />
    </g>
    <polyline points={zigzag()} fill="none" stroke="#00ffff" strokeWidth="2.600" strokeLinejoin="bevel" />
    <path d="M1412 836L1481 840" stroke="#ffd3e2" strokeWidth="2" />
    <path d="M1427 208L1425 292" stroke="#0000f4" strokeWidth="2" strokeDasharray="8 8" strokeDashoffset="4" />
    <path d="M1425 292L1423.500 347" stroke="#ffc000" strokeWidth="2" />
    <path d="M1497 210L1481 840" stroke="#0000f4" strokeWidth="2" strokeDasharray="8 8" />

    <circle cx="1059" cy="300" r="3" fill="#2c9038" />
    <text x="1062" y="297" fontSize="13" fill="#3a9a3a">YM</text>
    <path d="M1062 307L1147 308.500" stroke="#d42f2c" strokeWidth="2" />
    <path d="M1145 305L1167 309 1145 312z" fill="#f03434" />
    <text x="1151" y="322" fontSize="13" fill="#d8392e">XM</text>
    <path d="M1062 307L1064 222" stroke="#0b3cf0" strokeWidth="2.500" />
    <path d="M1064 202L1068 223h-7z" fill="#0b3cf0" />
    <text x="1043" y="201" fontSize="13" fill="#2f52f0">ZM</text>

    <path d="M39 908h28v30H39zM39 935h28" fill="#d2d3d4" stroke="#aaa" />
    <text x="63" y="910" fontSize="10" fill="#3a9a3a">Y</text>
    <path d="M67 910H32" stroke="#c82c2c" strokeWidth="3" />
    <path d="M21 910L33 907v6z" fill="#d23030" />
    <path d="M67 913L66 946" stroke="#0b3cf0" strokeWidth="2" />
    <path d="M63 944h6l-3 13z" fill="#0b3cf0" />
    <circle cx="67" cy="911" r="4.500" fill="#dcdcdc" stroke="#aaa" strokeWidth=".5" />
    <text x="12" y="914" fontSize="12" fill="#cc3838">X</text>
    <text x="62" y="967" fontSize="12" fill="#2f52f0">Z</text>
  </Scene>
);

/* ---------- operation navigator ---------- */

const Navigator = styled.aside`
  position: relative;
  display: flex;
  flex-direction: column;
  width: 226px;
  flex: none;
  padding-left: 9px;
`;

const NavTitle = styled.h2`
  display: flex;
  align-items: center;
  gap: 11px;
  height: 29px;
  margin: 0;
  padding-left: 3px;
  font-size: 12px;
  line-height: 16px;
  font-weight: 400;
  flex: none;
`;

const PinBox = styled.button`
  width: 12px;
  height: 11px;
  padding: 0;
  border: 1px solid #222;
  border-top-width: 2px;
  background: #fff;
`;

const TreeBox = styled.div`
  flex: 1;
  min-height: 0;
  overflow: hidden;
  border-left: 1px solid #c4c4c4;
`;

const TreeTable = styled.table`
  width: 100%;
  table-layout: fixed;
  border-collapse: separate;
  border-spacing: 0;
  white-space: nowrap;
`;

const HeadCell = styled.th`
  height: 22px;
  padding: 2px 0 0 6px;
  overflow: hidden;
  text-align: left;
  font-weight: 400;
  background: #f0f0f0;
  border: solid #d2d2d2;
  border-width: 1px 1px 1px 0;
`;

const Row = styled.tr`
  height: 20px;
  &:nth-child(even) {
    background: #fafafa;
  }
`;

const Cell = styled.td`
  height: 20px;
  padding: 0;
  overflow: hidden;
  border-bottom: 1px solid #ebebeb;
  &:first-child {
    border-right: 1px solid #000;
  }
`;

const StatusCell = styled(Cell)<{ $selected?: boolean }>`
  padding-left: 6px;
  background: ${(p) => (p.$selected ? "#3399ff" : "none")};
`;

const NodeLine = styled.div<{ $indent: number }>`
  display: flex;
  align-items: center;
  height: 19px;
  padding-left: ${(p) => p.$indent}px;
`;

const Elbow = styled.span<{ $last?: boolean }>`
  width: 9px;
  height: 20px;
  flex: none;
  background:
    repeating-linear-gradient(#999 0 1px, transparent 1px 2px) 0 0 / 1px ${(p) => (p.$last ? 10 : 20)}px no-repeat,
    repeating-linear-gradient(90deg, #999 0 1px, transparent 1px 2px) 0 10px / 9px 1px no-repeat;
`;

const Dash = styled.span`
  width: 5px;
  height: 1px;
  flex: none;
  background: repeating-linear-gradient(90deg, #999 0 1px, transparent 1px 2px);
`;

const Expander = styled.button`
  width: 9px;
  height: 9px;
  flex: none;
  padding: 0;
  border: 1px solid #bbb;
  background: linear-gradient(#222, #222) center / 5px 1px no-repeat #fff;
`;

const NodeLabel = styled.span<{ $selected?: boolean }>`
  flex: 1;
  height: 20px;
  line-height: 20px;
  padding-left: 3px;
  ${(p) =>
    p.$selected &&
    css`
      color: #fff;
      background: #3399ff;
      border: 1px dotted #a05a10;
      line-height: 18px;
      padding-left: 2px;
    `}
`;

const WarnSlot = styled.span`
  width: 17px;
  padding-left: 4px;
  overflow: hidden;
  flex: none;
`;

const ScrollTrack = styled.div`
  display: flex;
  align-items: center;
  height: 17px;
  flex: none;
  background: #ececec;
`;

const ScrollArrow = styled.button`
  width: 20px;
  height: 16px;
  padding: 0 0 0 8px;
  border: 0;
  background: none;
  &::after {
    content: "";
    display: block;
    width: 4px;
    border: 4px solid transparent;
    border-left-width: 0;
    border-right-color: #222;
  }
`;

const ScrollThumb = styled.button`
  width: 66px;
  height: 15px;
  padding: 0;
  border: 1px solid #8f8f8f;
  border-radius: 2px;
  background:
    repeating-linear-gradient(90deg, #555 0 1px, transparent 1px 3px) center / 8px 7px no-repeat,
    linear-gradient(#f3f3f3 45%, #d4d4d6 50%, #c4c4c8);
`;

const Splitter = styled.div`
  height: 5px;
  margin-top: 2px;
  flex: none;
  background: #dadada;
  border: solid #a6a6a6;
  border-width: 1px 0 1px 1px;
`;

const Section = styled.button`
  display: flex;
  align-items: center;
  justify-content: space-between;
  height: 24px;
  flex: none;
  padding: 2px 0 0 7px;
  border: 0;
  border-bottom: 2px solid #cfcfcf;
  background: none;
  color: #2b89be;
  font-size: 14px;
  line-height: 20px;
  &::after {
    content: "";
    align-self: flex-start;
    margin-top: 3px;
    border: solid transparent;
    border-width: 4px 0 0 2px;
    border-top-color: #2b89be;
  }
`;

const SectionFill = styled.div`
  height: 7px;
  flex: none;
`;

const Watermark = styled.svg`
  position: absolute;
  right: 210px;
  bottom: -25px;
  width: 74px;
  height: 84px;
`;

type Node = { label: string; kind: "root" | "leaf" | "branch" | "operation"; indent: number; icon?: string; last?: boolean; selected?: boolean };

const NODES: Node[] = [
  { label: "GEOMETRY", kind: "root", indent: 1 },
  { label: "未用项", kind: "leaf", indent: 10, icon: "folder" },
  { label: "MCS_MILL", kind: "branch", indent: 6, icon: "mcs" },
  { label: "WORKPIECE", kind: "branch", indent: 25, icon: "workpiece" },
  { label: "PLANAR_PROFILE", kind: "operation", indent: 48, icon: "opPlanar" },
  { label: "FACE_MILLING", kind: "operation", indent: 48, icon: "opFace" },
  { label: "CONTOUR_AREA", kind: "operation", indent: 48, icon: "opContour", last: true, selected: true },
];

const TreeRow = ({ node }: { node: Node }) => (
  <Row aria-selected={node.selected}>
    <Cell>
      <NodeLine $indent={node.indent}>
        {node.kind === "branch" && (
          <>
            <Expander aria-label={`折叠 ${node.label}`} />
            <Dash />
          </>
        )}
        {(node.kind === "leaf" || node.kind === "operation") && <Elbow $last={node.last} />}
        {node.kind === "operation" && (
          <WarnSlot>
            <Glyph name="warn" />
          </WarnSlot>
        )}
        {node.icon && <Glyph name={node.icon} />}
        <NodeLabel $selected={node.selected}>{node.label}</NodeLabel>
      </NodeLine>
    </Cell>
    <StatusCell $selected={node.selected}>{node.kind === "operation" && <Glyph name="check" />}</StatusCell>
  </Row>
);

const Panel = () => (
  <Navigator aria-label="工序导航器">
    <NavTitle>
      <PinBox aria-label="浮动面板" />
      工序导航器 - 几何
    </NavTitle>
    <TreeBox>
      <TreeTable>
        <colgroup>
          <col width="201" />
          <col />
        </colgroup>
        <thead>
          <tr>
            <HeadCell scope="col">名称</HeadCell>
            <HeadCell scope="col">刀</HeadCell>
          </tr>
        </thead>
        <tbody>
          {NODES.map((node) => (
            <TreeRow key={node.label} node={node} />
          ))}
          {Array.from({ length: 40 }, (_, i) => (
            <Row key={i}>
              <Cell />
              <Cell />
            </Row>
          ))}
        </tbody>
      </TreeTable>
    </TreeBox>
    <ScrollTrack>
      <ScrollArrow aria-label="向左滚动" />
      <ScrollThumb aria-label="水平滚动条" />
    </ScrollTrack>
    <Splitter />
    <Section>相依性</Section>
    <Section>细节</Section>
    <SectionFill />
    <Watermark viewBox="0 0 74 84" aria-hidden="true">
      <g opacity=".85">
        <path d="M2 20Q22 10 37 16L60 11 37 1 12 14z" fill="#c3e6f7" />
        <path d="M37 1L72 21V38Q66 22 37 16z" fill="#c3e6f7" />
        <path d="M54 12L72 22V42Q68 64 48 68L57 50V30L44 20Q60 22 60 36z" fill="#84d2f8" />
        <path d="M1 21L34 14Q18 22 18 50L2 58z" fill="#9adaf8" />
        <path d="M2 62Q0 36 17 32V52L37 66 55 68 72 50V62L37 82z" fill="#6fccf8" />
        <path d="M1 22Q20 12 37 17M17 32Q-2 40 2 56M18 52Q20 70 54 69M72 40Q70 62 38 68" fill="none" stroke="#fff" strokeWidth="1.500" />
        <path d="M37 18L58 30V54L37 66 16 54V30z" fill="#eaf1f5" />
        <path d="M37 24L53 33 37 42 21 33z" fill="#a9dcf5" />
        <path d="M20 35L36 44V60L20 51z" fill="#8fd0f2" />
        <path d="M54 35L38 44V60L54 51z" fill="#5fbbe8" />
      </g>
    </Watermark>
  </Navigator>
);

const StatusBar = styled.footer`
  display: flex;
  justify-content: flex-end;
  height: 11px;
  overflow: hidden;
  flex: none;
  padding: 2px 10px 0 0;
  border-top: 1px solid #a3a3a3;
`;

const MENUS: [string, string?][] = [
  ["文件", "F"], ["编辑", "E"], ["视图", "V"], ["插入", "S"], ["格式", "R"], ["工具", "T"], ["装配", "A"],
  ["信息", "I"], ["分析", "L"], ["首选项", "P"], ["窗口", "O"], ["GC工具箱"], ["帮助", "H"],
];

export default function App() {
  return (
    <Shell>
      <Global />
      <TitleStrip>
        <Brand>NX</Brand>
        <WindowMinimise aria-label="最小化窗口" />
      </TitleStrip>
      <MenuBar aria-label="主菜单">
        <Grip />
        <MenuIcon>
          <Glyph name="app" />
        </MenuIcon>
        {MENUS.map(([label, key]) => (
          <React.Fragment key={label}>
            {label === "首选项" && <MenuGap />}
            <MenuButton>
              {label}
              {key && (
                <>
                  (<u>{key}</u>)
                </>
              )}
            </MenuButton>
          </React.Fragment>
        ))}
        <ChildMinimise aria-label="最小化" />
      </MenuBar>

      <ToolRow $height={32}>
        <Tools label="标准" items="launch newFile open save | cut copy paste remove | undo v | repeat v | finder" />
        <Tools label="视图" items="fit v orient v cube v square v | section sectionB" />
        <Tools label="实用工具" gap={18} items="paint | showHide v | measure v ruler" />
        <Tools label="可视化" items="coneTarget coneMove v coneDark v coneSoft v" />
        <Tools label="工件" items="holderPage holderTree holderGrid | point | windows report | millPage millWrench millClock post" />
        <Tools label="几何体" items="wrenchPage trimA trimB trimC" />
        <Tools label="操作" items="spanLight spanNext !hatch !hatchRed ring spline maze treePal blocksPal rainbow" />
      </ToolRow>

      <ToolRow $height={26}>
        <Tools label="插入" items="newProgram newTool newGeometry newOperation" />
        <Tools label="导航" items="verify treePage tableTool axesGrey" />
        <Tools label="工序" items="genPath verifyPath listPath machine | toolPath report" />
        <Tools
          label="直线和圆弧"
          gap={3}
          items="!link | line lineAxes parallel cross tangentA tangentB tangentC tangentD mesh | arcA arcB arcC arcD | circA circB circC circD | circE circF circG"
        />
        <Tools label="曲线" items="lineRed arcRed shapes text" />
        <Tools label="特征" items="extrude sheets | goldStack mouldRed press blank bars goldDie mouldStack | boxes blueStep sheet door sketch board" />
        <Tools label="同步建模" items="moveFace v moveFace pullFace offset cyl resize blend v delFace copyFace v mirror v dim v group shell" />
      </ToolRow>

      <SelectionBar>
        <Picker $width={133} $after={7} aria-label="类型过滤器">
          <option>面</option>
        </Picker>
        <Picker $width={140} $after={3} aria-label="选择范围">
          <option>整个装配</option>
        </Picker>
        <ToolButton aria-label="treeGrey"><Glyph name="treeGrey" /></ToolButton>
        <Sep />
        <ToolButton aria-label="filterReset"><Glyph name="filterReset" /></ToolButton>
        <ToolButton aria-label="filterRed"><Glyph name="filterRed" /></ToolButton>
        <ArrowButton aria-label="更多选项" />
        <ToolButton aria-label="rotateAt"><Glyph name="rotateAt" /></ToolButton>
        <ToolButton aria-label="findTree"><Glyph name="findTree" /></ToolButton>
        <Sep />
        <ToolButton aria-label="marquee"><Glyph name="marquee" /></ToolButton>
        <ArrowButton aria-label="更多选项" />
        <Sep />
        <ToolButton aria-label="mouse"><Glyph name="mouse" /></ToolButton>
        <ToolButton aria-label="cubeSky"><Glyph name="cubeSky" /></ToolButton>
      </SelectionBar>

      <Main>
        <Viewport>
          <Model />
        </Viewport>
        <Panel />
      </Main>

      <ToolRow $height={26}>
        <Tools label="导航器视图" items="viewProgram viewTool !viewGeometry viewMethod" />
        <Tools label="注塑模向导" gap={86} items="heatPart v plus v layers v project waveLink crate v" />
      </ToolRow>
      <StatusBar>
        <Svg width="16" height="16" viewBox="0 0 16 16" aria-hidden="true">
          <path d="M1 5V1h4M11 1h4v4" stroke="#888" fill="none" />
          <path d="M4 4h9v9H4z" stroke="#555" fill="#4a7cc4" />
          <path d="M4 5h9" stroke="#555" strokeWidth="2" />
        </Svg>
      </StatusBar>
    </Shell>
  );
}
